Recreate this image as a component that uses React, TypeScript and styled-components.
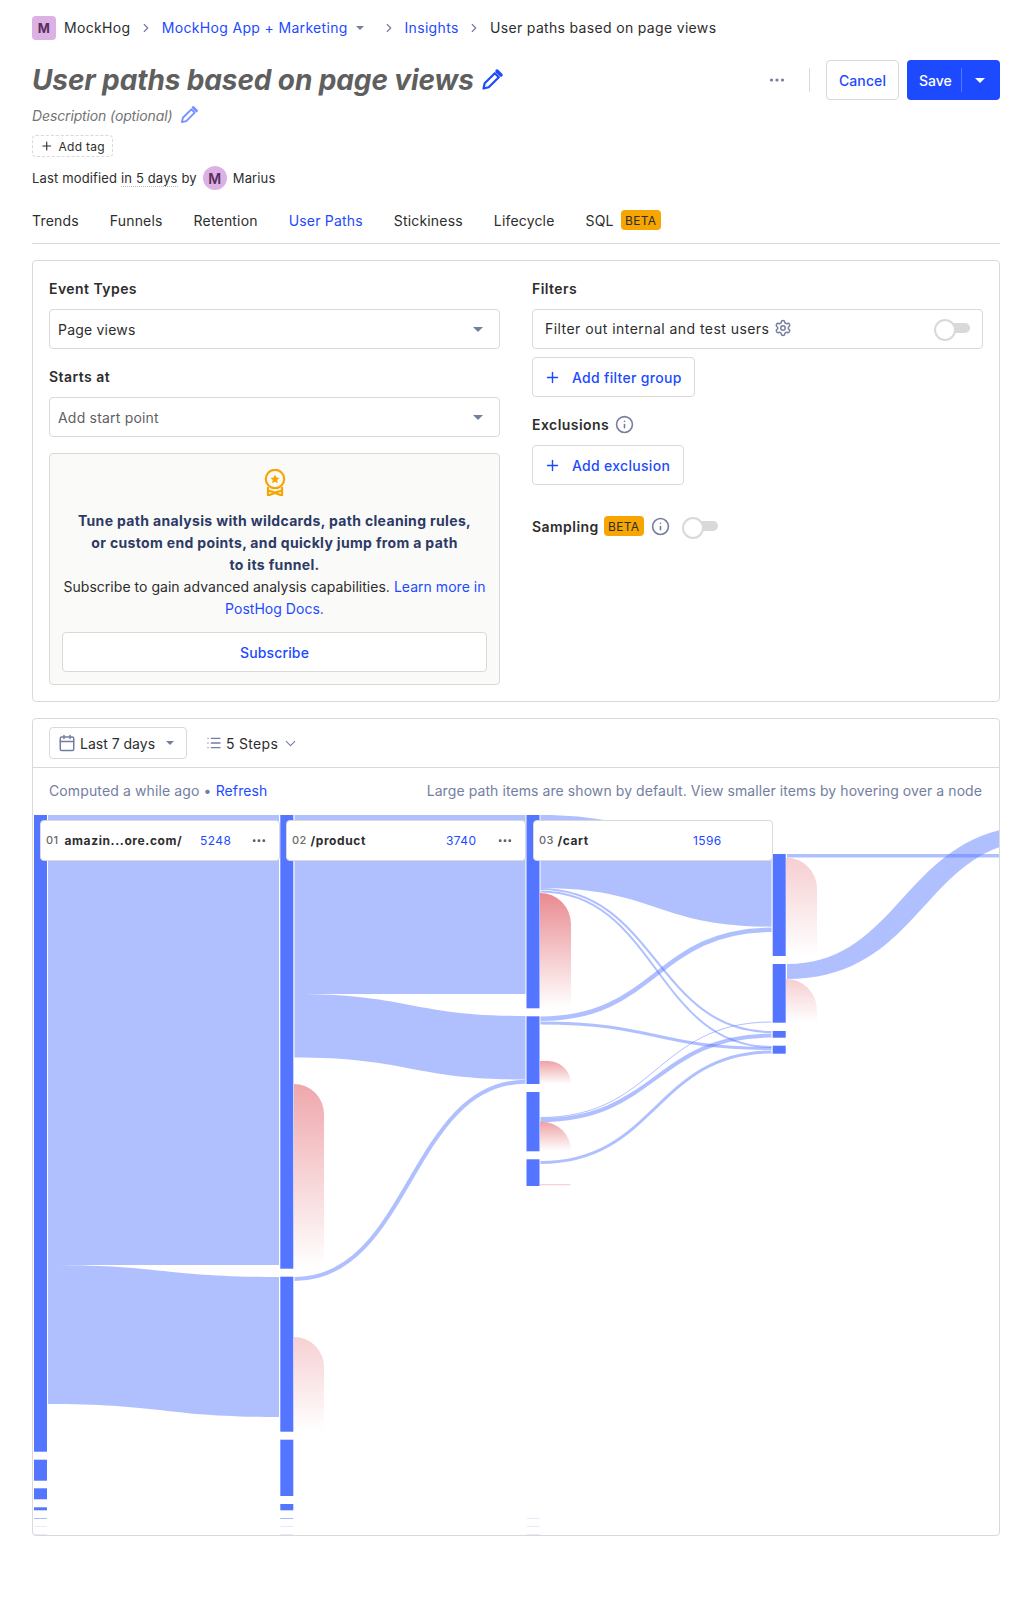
import styled, { createGlobalStyle } from 'styled-components';
import { ChevronDown, ChevronRight, Calendar, Info, List, Plus, Settings } from 'lucide-react';

const GlobalStyle = createGlobalStyle`
  * { box-sizing: border-box; }
  body {
    margin: 0;
    background: #fff;
    color: #2d2d2d;
    font-family: Inter, "Liberation Sans", sans-serif;
    font-size: 14px;
  }
`;

const Page = styled.div`
  width: 1032px;
  height: 1616px;
  padding: 16px 32px 0;
`;

const Breadcrumbs = styled.nav`
  display: flex;
  align-items: center;
  height: 24px;
  line-height: 24px;
  letter-spacing: 0.33px;
`;

const Logo = styled.span`
  width: 24px;
  height: 24px;
  border-radius: 4px;
  background: #dcb1e3;
  color: #572e5e;
  font-weight: 700;
  font-size: 13px;
  display: flex;
  align-items: center;
  justify-content: center;
  margin-right: 8px;
`;

const Crumb = styled.span<{ $link?: boolean }>`
  color: ${(p) => (p.$link ? '#1d4aff' : '#2d2d2d')};
`;

const CrumbSep = styled.span`
  display: flex;
  margin: 0 8.7px;
  color: #747ea1;
`;

const Caret = styled.span<{ $color?: string; $small?: boolean }>`
  display: inline-block;
  width: 0;
  height: 0;
  border-left: ${(p) => (p.$small ? 4 : 5)}px solid transparent;
  border-right: ${(p) => (p.$small ? 4 : 5)}px solid transparent;
  border-top: ${(p) => (p.$small ? 4 : 5)}px solid ${(p) => p.$color ?? '#747ea1'};
`;

const TitleRow = styled.div`
  display: flex;
  align-items: center;
  justify-content: space-between;
  margin-top: 20px;
  height: 40px;
`;

const TitleWrap = styled.div`
  display: flex;
  align-items: center;
  gap: 6px;
`;

const Title = styled.h1`
  margin: 0;
  font-size: 28px;
  font-weight: 700;
  font-style: italic;
  letter-spacing: -0.12px;
  color: #5f5f5f;
  line-height: 40px;
`;

const Actions = styled.div`
  display: flex;
  align-items: center;
`;

const DotsButton = styled.span`
  display: flex;
  color: #747ea1;
  margin-right: 24px;
`;

const ActionDivider = styled.span`
  width: 1px;
  height: 24px;
  background: #d9d9d9;
  margin-right: 16px;
`;

const CancelButton = styled.button`
  height: 40px;
  width: 73px;
  border: 1px solid #d9d9d9;
  border-radius: 4px;
  background: #fff;
  color: #1d4aff;
  font: 500 14px Inter, sans-serif;
  letter-spacing: 0.1px;
  margin-right: 8px;
`;

const SaveButton = styled.button`
  display: flex;
  align-items: center;
  height: 40px;
  width: 93px;
  padding: 0 0 0 12px;
  border: 0;
  border-radius: 4px;
  background: #1d4aff;
  color: #fff;
  font: 500 14px Inter, sans-serif;
`;

const SaveDivider = styled.span`
  width: 1px;
  height: 24px;
  background: rgba(255, 255, 255, 0.25);
  margin: 0 13px 0 9px;
`;

const Description = styled.div`
  display: flex;
  align-items: center;
  gap: 7px;
  margin-top: 5px;
  height: 20px;
  font-style: italic;
  letter-spacing: -0.13px;
  color: #747474;
`;

const AddTag = styled.button`
  display: flex;
  align-items: center;
  gap: 5px;
  margin-top: 10px;
  width: 81px;
  height: 22px;
  padding: 0 7px;
  border: 1px dashed #d9d9d9;
  border-radius: 4px;
  background: #fff;
  color: #2d2d2d;
  font: 400 12px Inter, sans-serif;
  letter-spacing: 0.3px;
  white-space: nowrap;
`;

const Modified = styled.div`
  display: flex;
  align-items: center;
  height: 24px;
  margin-top: 9px;
  font-size: 13px;
  letter-spacing: 0.15px;
  white-space: pre;
`;

const Dotted = styled.span`
  border-bottom: 1px dotted #b8b8b8;
`;

const Avatar = styled.span`
  width: 24px;
  height: 24px;
  border-radius: 50%;
  background: #dcb1e3;
  color: #572e5e;
  font-size: 14px;
  font-weight: 600;
  display: flex;
  align-items: center;
  justify-content: center;
  margin: 0 6px;
`;

const Tabs = styled.div`
  display: flex;
  align-items: center;
  gap: 31px;
  height: 54px;
  padding-top: 7px;
  letter-spacing: 0.18px;
  border-bottom: 1px solid #d9d9d9;
`;

const Tab = styled.span<{ $active?: boolean }>`
  display: flex;
  align-items: center;
  gap: 7px;
  color: ${(p) => (p.$active ? '#1d4aff' : '#2d2d2d')};
`;

const Beta = styled.span`
  display: inline-flex;
  align-items: center;
  justify-content: center;
  width: 40px;
  height: 20px;
  border-radius: 4px;
  background: #f7a501;
  color: #2d2d2d;
  font-size: 12px;
  font-weight: 400;
  letter-spacing: 0.3px;
`;

const EditorCard = styled.section`
  margin-top: 16px;
  height: 442px;
  padding: 16px;
  border: 1px solid #d9d9d9;
  border-radius: 4px;
  display: grid;
  grid-template-columns: 451px 451px;
  column-gap: 32px;
`;

const Column = styled.div`
  display: flex;
  flex-direction: column;
`;

const Label = styled.div<{ $top?: number; $gap?: number }>`
  display: flex;
  align-items: center;
  gap: ${(p) => p.$gap ?? 6}px;
  height: 24px;
  padding-bottom: 2px;
  margin-top: ${(p) => p.$top ?? 0}px;
  font-weight: 600;
  letter-spacing: 0.45px;
  color: #2d2d2d;
`;

const SelectBox = styled.div<{ $muted?: boolean }>`
  display: flex;
  align-items: center;
  justify-content: space-between;
  height: 40px;
  margin-top: 8px;
  padding: 0 16px 0 8px;
  border: 1px solid #d9d9d9;
  border-radius: 4px;
  letter-spacing: 0.2px;
  color: ${(p) => (p.$muted ? '#5f5f5f' : '#2d2d2d')};
`;

const Upsell = styled.div`
  margin-top: 16px;
  height: 232px;
  padding: 15px 12px 0;
  border: 1px solid #d9d9d9;
  border-radius: 4px;
  background: #fafaf9;
  text-align: center;
  line-height: 22px;
  letter-spacing: 0.03px;
`;

const UpsellIcon = styled.div`
  display: flex;
  justify-content: center;
  height: 27px;
  margin-bottom: 14px;
`;

const UpsellTitle = styled.div`
  font-weight: 700;
  letter-spacing: 0.34px;
  color: #2d3a66;
`;

const TextLink = styled.a`
  color: #1d4aff;
`;

const WideButton = styled.button`
  display: block;
  width: 100%;
  height: 40px;
  margin-top: 12px;
  border: 1px solid #d9d9d9;
  border-radius: 4px;
  background: #fff;
  color: #1d4aff;
  font: 500 14px Inter, sans-serif;
  letter-spacing: 0.15px;
`;

const FilterBox = styled.div`
  display: flex;
  align-items: center;
  height: 40px;
  margin-top: 8px;
  padding: 0 12px 2px;
  border: 1px solid #d9d9d9;
  border-radius: 4px;
  gap: 5px;
  letter-spacing: 0.45px;
`;

const Toggle = styled.span<{ $push?: boolean }>`
  position: relative;
  display: inline-block;
  flex: none;
  width: 36px;
  height: 20px;
  margin-left: ${(p) => (p.$push ? 'auto' : '0')};

  &::before {
    content: '';
    position: absolute;
    left: 4px;
    right: 0;
    top: 5px;
    height: 10px;
    border-radius: 5px;
    background: #d9d9d9;
  }

  &::after {
    content: '';
    position: absolute;
    left: 0;
    top: 1px;
    width: 18px;
    height: 18px;
    border-radius: 50%;
    background: #fff;
    border: 2px solid #d9d9d9;
  }
`;

const AddButton = styled.button<{ $width: number }>`
  display: flex;
  align-items: center;
  gap: 11px;
  width: ${(p) => p.$width}px;
  height: 40px;
  margin-top: 8px;
  padding: 0 11px;
  border: 1px solid #d9d9d9;
  border-radius: 4px;
  background: #fff;
  color: #1d4aff;
  font: 500 14px Inter, sans-serif;
  letter-spacing: 0.3px;
`;

const InsightCard = styled.section`
  margin-top: 16px;
  height: 818px;
  border: 1px solid #d9d9d9;
  border-radius: 4px;
  overflow: hidden;
`;

const InsightHeader = styled.div`
  display: flex;
  align-items: center;
  gap: 20px;
  height: 49px;
  padding: 0 16px;
  border-bottom: 1px solid #d9d9d9;
`;

const DateButton = styled.div`
  display: flex;
  align-items: center;
  gap: 4px;
  width: 138px;
  height: 32px;
  padding: 0 8px;
  border: 1px solid #d9d9d9;
  border-radius: 4px;
  white-space: nowrap;
  color: #2d2d2d;
`;

const StepsButton = styled.div`
  display: flex;
  align-items: center;
  gap: 4px;
  margin-left: -1px;
  letter-spacing: 0.3px;
  color: #2d2d2d;
`;

const Muted = styled.span`
  color: #747ea1;
`;

const InfoRow = styled.div`
  display: flex;
  align-items: center;
  justify-content: space-between;
  height: 47px;
  padding: 0 17px 2px 16px;
  color: #747ea1;
`;

const ComputedText = styled.span`
  letter-spacing: 0.12px;
`;

const HintText = styled.span`
  letter-spacing: 0.08px;
`;

const Chart = styled.div`
  position: relative;
  height: 720px;
`;

const ChartSvg = styled.svg`
  display: block;
`;

const NodeCard = styled.div<{ $left: number }>`
  position: absolute;
  left: ${(p) => p.$left}px;
  top: 5px;
  width: 240px;
  height: 41px;
  padding-left: 5px;
  display: grid;
  grid-template-columns: 154px 52px 1fr;
  align-items: center;
  background: #fff;
  border: 1px solid #d9d9d9;
  border-radius: 4px;
  font-size: 12px;
`;

const NodeName = styled.span`
  display: flex;
  font-weight: 700;
  letter-spacing: 0.6px;
  white-space: nowrap;
`;

const NodeIndex = styled.span`
  width: 18.5px;
  font-size: 11px;
  font-weight: 500;
  letter-spacing: 0.5px;
  color: #6a6a6a;
`;

const NodeCount = styled.span`
  color: #1d4aff;
  letter-spacing: 0.4px;
`;

const NodeDots = styled.span`
  display: flex;
  color: #5f5f5f;
`;

const PencilIcon = ({ size, color, opacity }: { size: number; color: string; opacity?: number }) => (
  <svg width={size} height={size} viewBox="0 0 24 24" fill="none" opacity={opacity}>
    <path d="M3.5 20.5l1.2-5.2L14.8 5.2l4 4L8.7 19.3z" stroke={color} strokeWidth="2.2" strokeLinejoin="round" />
    <path d="M17 3l4 4" stroke={color} strokeWidth="3.4" strokeLinecap="round" />
  </svg>
);

const Dots = ({ width = 16 }: { width?: number }) => (
  <svg width={width} height={width / 4} viewBox="0 0 16 4" fill="currentColor">
    <circle cx="2.5" cy="2" r="1.6" />
    <circle cx="8" cy="2" r="1.6" />
    <circle cx="13.5" cy="2" r="1.6" />
  </svg>
);

const MedalIcon = () => (
  <svg width="22" height="27" viewBox="0 0 22 27" fill="none">
    <circle cx="11" cy="10" r="9.2" stroke="#f7a501" strokeWidth="2.2" />
    <path
      d="M11 5.5l1.4 3 3.2.4-2.4 2.2.7 3.2-2.9-1.6-2.9 1.6.7-3.2-2.4-2.2 3.2-.4z"
      fill="#f7a501"
    />
    <path d="M4 18v8.5l7-2.5 7 2.5V18M4 21.5l7 2 7-2" stroke="#f7a501" strokeWidth="2.2" />
  </svg>
);

const BAR_X = [34, 280.3, 526.5, 772.7];
const BAR_W = 13;

// y ranges of the node bars, per column
const bars: [number, number, number?][][] = [
  [[815, 1451.7], [1459.7, 1480.7], [1488.3, 1499.3], [1507.3, 1510.3], [1518, 1519, 0.5], [1526, 1527, 0.15], [1534, 1535, 0.15]],
  [[815, 1268.7], [1276.7, 1431.7], [1439.7, 1496], [1504, 1510.3], [1518, 1519, 0.5], [1526, 1527, 0.15], [1534, 1535, 0.15]],
  [[815, 1008.3], [1016.3, 1084], [1092, 1151.3], [1159.3, 1186], [1518, 1519, 0.15], [1526, 1527, 0.15], [1534, 1535, 0.15]],
  [[854, 956], [964, 1022.7], [1031, 1037.7], [1045.7, 1053.7]],
];

// x0, source top, source bottom, x1, target top, target bottom, edge spread
type Flow = [number, number, number, number, number, number, number?];

const flows: Flow[] = [
  [48, 815, 1265, 279, 815, 1265],
  [48, 1265, 1404, 279, 1277, 1417],
  [294.5, 815, 994, 525.5, 815, 994],
  [294.5, 994, 1057.5, 525.5, 1016, 1079.5],
  [294.5, 1277, 1281, 525.5, 1079.5, 1084],
  [540.5, 815, 888, 771.5, 854, 926.7],
  [540.5, 888, 890, 771.5, 1031, 1033],
  [540.5, 890.5, 892.5, 771.5, 1046, 1048],
  [540.5, 1016.5, 1021, 771.5, 927.5, 932],
  [540.5, 1021.5, 1024.5, 771.5, 1047, 1050],
  [540.5, 1117, 1118, 771.5, 1021.5, 1022.5],
  [540.5, 1118, 1122, 771.5, 1033.5, 1037.5],
  [540.5, 1161, 1164, 771.5, 1050.5, 1053.5],
  [787, 854, 857.5, 1040, 854, 857.5],
  [787, 964, 979, 1040, 825.5, 840.5, 10],
];

// x, top, bottom, width, start opacity
const drops: [number, number, number, number, number][] = [
  [294, 1084, 1268, 30, 0.75],
  [294, 1337, 1432, 30, 0.4],
  [540, 893, 1008, 31, 1],
  [540, 1061, 1084, 31, 0.8],
  [540, 1121.7, 1151, 31, 0.8],
  [540, 1184, 1186, 31, 0.5],
  [786, 857.7, 956, 31, 0.42],
  [786, 979, 1022, 31, 0.42],
];

const flowArea = ([x0, a, b, x1, c, d, spread = 0]: Flow) => {
  const m = (x0 + x1) / 2;
  const top = m - spread;
  const low = m + spread;
  return `M${x0} ${a}C${top} ${a} ${top} ${c} ${x1} ${c}L${x1} ${d}C${low} ${d} ${low} ${b} ${x0} ${b}Z`;
};

const flowLine = ([x0, a, b, x1, c, d]: Flow) => {
  const m = (x0 + x1) / 2;
  const y0 = (a + b) / 2;
  const y1 = (c + d) / 2;
  return `M${x0} ${y0}C${m} ${y0} ${m} ${y1} ${x1} ${y1}`;
};

const dropPath = ([x, top, bottom, w]: (typeof drops)[number]) => {
  const r = Math.min(w, bottom - top);
  return `M${x} ${top}L${x + w - r} ${top}A${r} ${r} 0 0 1 ${x + w} ${top + r}L${x + w} ${bottom}L${x} ${bottom}Z`;
};

const nodes = [
  { left: 7, index: '01', name: 'amazin...ore.com/', count: 5248, dots: true },
  { left: 253, index: '02', name: '/product', count: 3740, dots: true },
  { left: 500, index: '03', name: '/cart', count: 1596, dots: false },
];

const Sankey = () => (
  <ChartSvg width="966" height="720" viewBox="33 815 966 720">
    <defs>
      {drops.map((d, i) => (
        <linearGradient key={i} id={`drop${i}`} x1="0" y1="0" x2="0" y2="1">
          <stop offset="0" stopColor="#e98a90" stopOpacity={d[4]} />
          <stop offset="1" stopColor="#e98a90" stopOpacity="0" />
        </linearGradient>
      ))}
    </defs>
    {flows.map((f, i) =>
      f[2] - f[1] > 20 || f[6] ? (
        <path key={i} d={flowArea(f)} fill="#5375ff" fillOpacity="0.46" />
      ) : (
        <path key={i} d={flowLine(f)} fill="none" stroke="#5375ff" strokeOpacity="0.46" strokeWidth={f[2] - f[1]} />
      ),
    )}
    {drops.map((d, i) => (
      <path key={i} d={dropPath(d)} fill={`url(#drop${i})`} />
    ))}
    {bars.map((column, c) =>
      column.map(([top, bottom, opacity = 1], i) => (
        <rect
          key={`${c}-${i}`}
          x={BAR_X[c]}
          y={top}
          width={BAR_W}
          height={bottom - top}
          fill="#5375ff"
          opacity={opacity}
        />
      )),
    )}
  </ChartSvg>
);

export default function App() {
  return (
    <Page>
      <GlobalStyle />
      <Breadcrumbs>
        <Logo>M</Logo>
        <Crumb>MockHog</Crumb>
        <CrumbSep><ChevronRight size={14} /></CrumbSep>
        <Crumb $link>MockHog App + Marketing</Crumb>
        <CrumbSep><Caret $small /></CrumbSep>
        <CrumbSep><ChevronRight size={14} /></CrumbSep>
        <Crumb $link>Insights</Crumb>
        <CrumbSep><ChevronRight size={14} /></CrumbSep>
        <Crumb>User paths based on page views</Crumb>
      </Breadcrumbs>

      <TitleRow>
        <TitleWrap>
          <Title>User paths based on page views</Title>
          <PencilIcon size={24} color="#1d4aff" />
        </TitleWrap>
        <Actions>
          <DotsButton><Dots /></DotsButton>
          <ActionDivider />
          <CancelButton>Cancel</CancelButton>
          <SaveButton>
            Save
            <SaveDivider />
            <Caret $color="#fff" />
          </SaveButton>
        </Actions>
      </TitleRow>

      <Description>
        Description (optional)
        <PencilIcon size={20} color="#1d4aff" opacity={0.6} />
      </Description>
      <AddTag><Plus size={14} />Add tag</AddTag>
      <Modified>
        Last modified <Dotted>in 5 days</Dotted> by
        <Avatar>M</Avatar>
        Marius
      </Modified>

      <Tabs>
        <Tab>Trends</Tab>
        <Tab>Funnels</Tab>
        <Tab>Retention</Tab>
        <Tab $active>User Paths</Tab>
        <Tab>Stickiness</Tab>
        <Tab>Lifecycle</Tab>
        <Tab>SQL <Beta>BETA</Beta></Tab>
      </Tabs>

      <EditorCard>
        <Column>
          <Label>Event Types</Label>
          <SelectBox>Page views<Caret /></SelectBox>
          <Label $top={16}>Starts at</Label>
          <SelectBox $muted>Add start point<Caret /></SelectBox>
          <Upsell>
            <UpsellIcon><MedalIcon /></UpsellIcon>
            <UpsellTitle>
              Tune path analysis with wildcards, path cleaning rules,
              <br />
              or custom end points, and quickly jump from a path
              <br />
              to its funnel.
            </UpsellTitle>
            Subscribe to gain advanced analysis capabilities. <TextLink>Learn more in</TextLink>
            <br />
            <TextLink>PostHog Docs.</TextLink>
            <WideButton>Subscribe</WideButton>
          </Upsell>
        </Column>
        <Column>
          <Label>Filters</Label>
          <FilterBox>
            Filter out internal and test users
            <Muted><Settings size={18} style={{ display: 'block' }} /></Muted>
            <Toggle $push />
          </FilterBox>
          <AddButton $width={163}><Plus size={17} />Add filter group</AddButton>
          <Label $top={16}>Exclusions<Muted><Info size={19} style={{ display: 'block' }} /></Muted></Label>
          <AddButton $width={152}><Plus size={17} />Add exclusion</AddButton>
          <Label $top={30} $gap={5}>
            Sampling
            <Beta>BETA</Beta>
            <Muted><Info size={19} style={{ display: 'block', margin: '0 7px 0 2px' }} /></Muted>
            <Toggle />
          </Label>
        </Column>
      </EditorCard>

      <InsightCard>
        <InsightHeader>
          <DateButton>
            <Muted><Calendar size={18} style={{ display: 'block' }} /></Muted>
            Last 7 days
            <Caret $small style={{ marginLeft: 7 }} />
          </DateButton>
          <StepsButton>
            <Muted><List size={16} style={{ display: 'block' }} /></Muted>
            5 Steps
            <Muted><ChevronDown size={17} strokeWidth={1.5} style={{ display: 'block' }} /></Muted>
          </StepsButton>
        </InsightHeader>
        <InfoRow>
          <ComputedText>Computed a while ago • <TextLink>Refresh</TextLink></ComputedText>
          <HintText>Large path items are shown by default. View smaller items by hovering over a node</HintText>
        </InfoRow>
        <Chart>
          <Sankey />
          {nodes.map((n) => (
            <NodeCard key={n.index} $left={n.left}>
              <NodeName><NodeIndex>{n.index}</NodeIndex>{n.name}</NodeName>
              <NodeCount>{n.count}</NodeCount>
              {n.dots && <NodeDots><Dots width={14} /></NodeDots>}
            </NodeCard>
          ))}
        </Chart>
      </InsightCard>
    </Page>
  );
}
